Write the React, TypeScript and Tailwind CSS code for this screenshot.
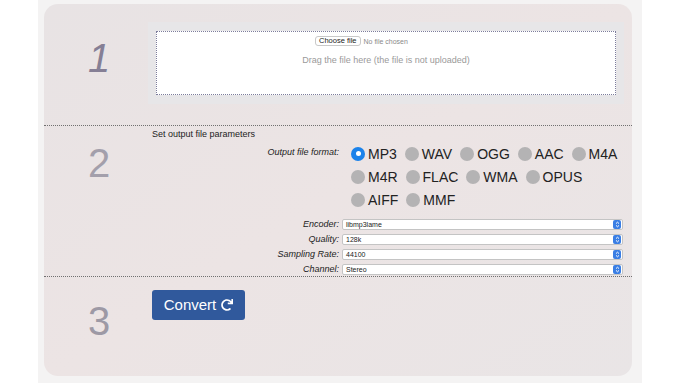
import React from "react";
import { FaRedo } from "react-icons/fa";

const formatRows: string[][] = [
  ["MP3", "WAV", "OGG", "AAC", "M4A"],
  ["M4R", "FLAC", "WMA", "OPUS"],
  ["AIFF", "MMF"],
];

const settings = [
  { label: "Encoder:", value: "libmp3lame" },
  { label: "Quality:", value: "128k" },
  { label: "Sampling Rate:", value: "44100" },
  { label: "Channel:", value: "Stereo" },
];

const Radio = ({ label, checked }: { label: string; checked?: boolean }) => (
  <div className="flex items-center gap-[3px]">
    {checked ? (
      <span className="w-[14px] h-[14px] rounded-full bg-[#1b82ea] flex items-center justify-center">
        <span className="w-[5px] h-[5px] rounded-full bg-white" />
      </span>
    ) : (
      <span className="w-[14px] h-[14px] rounded-full bg-[#b4b3b4]" />
    )}
    <span className="text-[14px] leading-none text-[#222]">{label}</span>
  </div>
);

const SelectBox = ({ value }: { value: string }) => (
  <div className="h-[11px] bg-white border border-[#c4c4c4] rounded-[2px] flex items-center justify-between pl-[3px] pr-[1px]">
    <span className="text-[7px] leading-none text-[#222]">{value}</span>
    <span className="w-[8px] h-[9px] rounded-[2px] bg-[#3a7ee4] flex flex-col items-center justify-center">
      <svg width="5" height="7" viewBox="0 0 5 7" fill="none" stroke="white" strokeWidth="1">
        <path d="M1 2.6 L2.5 1.2 L4 2.6" />
        <path d="M1 4.4 L2.5 5.8 L4 4.4" />
      </svg>
    </span>
  </div>
);

export default function App() {
  return (
    <div className="min-h-screen bg-white" style={{ fontFamily: "'Liberation Sans', Arial, sans-serif" }}>
      <div className="ml-[38px] w-[604px] h-[383px] bg-[#f4f3f3] pl-[6px] pt-[4px]">
        <div className="w-[588px] h-[372px] rounded-[14px] bg-gradient-to-br from-[#e8e3e4] via-[#ece4e4] to-[#e9e5e6] flex flex-col overflow-hidden">
          {/* step 1 */}
          <div className="flex h-[121px]">
            <div className="w-[104px] pl-[6px] pt-[34px] text-center text-[40px] leading-none italic text-[#857f95]">1</div>
            <div className="flex-1 pt-[18px] pr-[8px]">
              <div className="h-[82px] bg-[#e7e6e8] px-[8px] py-[9px]">
                <div className="h-full bg-white border border-dotted border-[#7d7d9c] flex flex-col">
                  <div className="flex items-center gap-[3px] mt-[4px] ml-[158px]">
                    <span className="h-[10px] px-[3px] bg-white border border-[#c9c9c9] rounded-[3px] text-[7.5px] leading-[8px] text-[#222]">
                      Choose file
                    </span>
                    <span className="text-[7px] leading-none text-[#8a8a8a]">No file chosen</span>
                  </div>
                  <p className="mt-[9px] text-center text-[9px] leading-[11px] text-[#9a9a9a]">
                    Drag the file here (the file is not uploaded)
                  </p>
                </div>
              </div>
            </div>
          </div>

          {/* step 2 */}
          <div className="flex h-[151px] border-t border-dotted border-[#707070]">
            <div className="w-[104px] pl-[6px] pt-[17px] text-center text-[40px] leading-none text-[#a39fab]">2</div>
            <div className="flex-1 pr-[9px]">
              <p className="mt-[3px] pl-[4px] text-[9px] leading-[11px] text-[#222]">Set output file parameters</p>
              <div className="mt-[2px] grid grid-cols-[191px_1fr] gap-x-[3px]">
                <div className="text-right italic text-[9px] leading-[20px] text-[#222]">Output file format:</div>
                <div className="pl-[9px]">
                  {formatRows.map((row, i) => (
                    <div key={i} className="h-[23px] flex items-center gap-x-[8px] whitespace-nowrap">
                      {row.map((f) => (
                        <Radio key={f} label={f} checked={f === "MP3"} />
                      ))}
                    </div>
                  ))}
                </div>
              </div>
              <div className="mt-[8px] grid grid-cols-[191px_1fr] gap-x-[3px] gap-y-[4px]">
                {settings.map((s) => (
                  <React.Fragment key={s.label}>
                    <div className="text-right italic text-[9px] leading-[11px] text-[#222]">{s.label}</div>
                    <SelectBox value={s.value} />
                  </React.Fragment>
                ))}
              </div>
            </div>
          </div>

          {/* step 3 */}
          <div className="flex flex-1 border-t border-dotted border-[#707070]">
            <div className="w-[104px] pl-[6px] pt-[24px] text-center text-[40px] leading-none text-[#9d99a5]">3</div>
            <div className="flex-1 pt-[13px] pl-[4px]">
              <button className="h-[30px] w-[93px] rounded-[3px] bg-[#30599c] text-white flex items-center justify-center gap-[5px] text-[15px]">
                Convert
                <FaRedo className="text-[12px]" />
              </button>
            </div>
          </div>
        </div>
      </div>
    </div>
  );
}
